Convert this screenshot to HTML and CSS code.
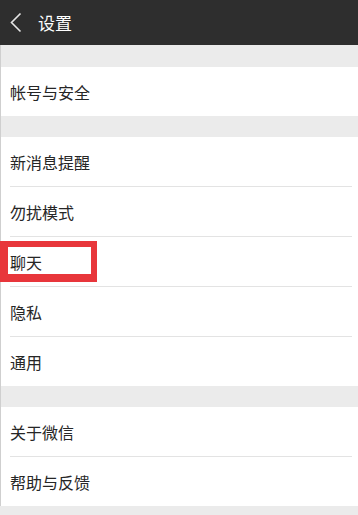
FILE: index.html
```html
<!DOCTYPE html>
<html lang="zh-CN">
<head>
<meta charset="utf-8">
<title>设置</title>
<link rel="stylesheet" href="styles.css">
</head>
<body>
<header class="topbar">
  <svg class="back" width="12" height="22" viewBox="0 0 12 22"><polyline points="10.5,1.5 1.5,10.5 10.5,19.5" fill="none" stroke="#e6e6e6" stroke-width="1.6"/></svg>
  <span class="title">设置</span>
</header>
<main class="content">
  <section class="group">
    <div class="row">帐号与安全</div>
  </section>
  <section class="group">
    <div class="row">新消息提醒</div>
    <div class="row">勿扰模式</div>
    <div class="row highlighted">聊天<span class="mark"></span></div>
    <div class="row">隐私</div>
    <div class="row">通用</div>
  </section>
  <section class="group">
    <div class="row">关于微信</div>
    <div class="row">帮助与反馈</div>
  </section>
</main>
</body>
</html>
```
FILE: styles.css
```css
html, body {
  margin: 0;
  padding: 0;
  background: #ebebeb;
  font-family: "Noto Sans CJK SC", "Noto Sans", sans-serif;
}
.topbar {
  height: 45px;
  background: #2e2e2e;
  display: flex;
  align-items: center;
  padding-left: 10px;
  box-sizing: border-box;
}
.back {
  display: block;
  margin-right: 16px;
}
.title {
  color: #ffffff;
  font-size: 17px;
  line-height: 1;
}
.content {
  border-left: 1px solid #cfcfcf;
  padding-top: 22px;
  display: flex;
  flex-direction: column;
  gap: 21px;
}
.group {
  background: #ffffff;
}
.row {
  position: relative;
  height: 49px;
  display: flex;
  align-items: center;
  padding-left: 9px;
  font-size: 16px;
  color: #262626;
}
.row + .row {
  border-top: 1px solid #e3e3e3;
  margin-left: 9px;
  margin-right: 6px;
  padding-left: 0;
}
.mark {
  position: absolute;
  left: -10px;
  top: 4px;
  width: 83px;
  height: 27px;
  border: solid #e8363b;
  border-width: 6px 6px 8px 8px;
}
```
